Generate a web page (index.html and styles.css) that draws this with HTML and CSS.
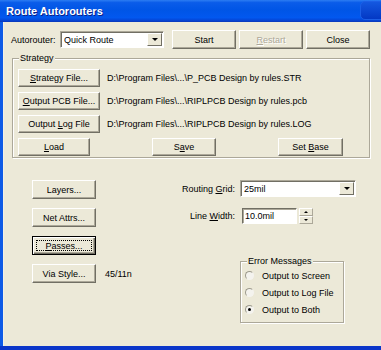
FILE: index.html
```html
<!DOCTYPE html>
<html lang="en">

<head>
    <meta charset="UTF-8">
    <title>Route Autorouters</title>
    <link rel="stylesheet" href="styles.css">
</head>

<body>
    <div class="window">
        <div class="titlebar">
            <span class="title">Route Autorouters</span>
            <span class="caption-btn"></span>
        </div>
        <div class="client">
            <!-- autorouter choice + main buttons -->
            <div class="top-row">
                <span class="lbl-router">Autorouter:</span>
                <div class="combo combo-router">
                    <span class="combo-text">Quick Route</span>
                    <span class="drop-btn"><i class="arrow-down"></i></span>
                </div>
                <div class="top-buttons">
                    <button class="btn top-btn" type="button">Start</button>
                    <button class="btn top-btn disabled" type="button"><u>R</u>estart</button>
                    <button class="btn top-btn" type="button">Close</button>
                </div>
            </div>

            <!-- strategy files -->
            <fieldset class="group strategy">
                <legend>Strategy</legend>
                <div class="file-row">
                    <button class="btn file-btn" type="button"><u>S</u>trategy File...</button>
                    <span class="path">D:\Program Files\...\P_PCB Design by rules.STR</span>
                </div>
                <div class="file-row">
                    <button class="btn file-btn" type="button"><u>O</u>utput PCB File...</button>
                    <span class="path">D:\Program Files\...\RIPLPCB Design by rules.pcb</span>
                </div>
                <div class="file-row">
                    <button class="btn file-btn" type="button">Output <u>L</u>og File</button>
                    <span class="path">D:\Program Files\...\RIPLPCB Design by rules.LOG</span>
                </div>
                <div class="action-row">
                    <button class="btn load-btn" type="button"><u>L</u>oad</button>
                    <button class="btn save-btn" type="button">S<u>a</u>ve</button>
                    <button class="btn base-btn" type="button">Set <u>B</u>ase</button>
                </div>
            </fieldset>

            <div class="lower">
                <div class="left-col">
                    <button class="btn side-btn" type="button">Layers...</button>
                    <button class="btn side-btn" type="button">Net Attrs...</button>
                    <button class="btn side-btn focused" type="button"><span class="focus-rect"><u>P</u>asses...</span></button>
                    <div class="via-row">
                        <button class="btn side-btn" type="button">Via Style...</button>
                        <span class="via-val">45/11n</span>
                    </div>
                </div>
                <div class="right-col">
                    <div class="fields">
                        <span class="field-lbl">Routing <u>G</u>rid:</span>
                        <div class="combo combo-grid">
                            <span class="combo-text">25mil</span>
                            <span class="drop-btn"><i class="arrow-down"></i></span>
                        </div>
                        <span class="field-lbl">Line <u>W</u>idth:</span>
                        <div class="width-field">
                            <span class="textbox">10.0mil</span>
                            <span class="spin">
                                <span class="spin-part"><i class="arrow-up small"></i></span>
                                <span class="spin-part"><i class="arrow-down small"></i></span>
                            </span>
                        </div>
                    </div>
                    <fieldset class="group errors">
                        <legend>Error Messages</legend>
                        <div class="radio"><span class="radio-dot"></span>Output to Screen</div>
                        <div class="radio"><span class="radio-dot"></span>Output to Log File</div>
                        <div class="radio"><span class="radio-dot checked"></span>Output to Both</div>
                    </fieldset>
                </div>
            </div>
        </div>
    </div>
</body>
</html>
```

FILE: styles.css
```css
* {
    box-sizing: border-box;
}

body {
    margin: 0;
    font-family: "Liberation Sans", Arial, sans-serif;
    font-size: 9px;
    color: #000;
    background: #ece9d8;
}

.window {
    width: 381px;
    height: 350px;
    overflow: hidden;
    display: flex;
    flex-direction: column;
    border-bottom: 4px solid #0a35c9;
}

/* title bar */
.titlebar {
    position: relative;
    height: 22px;
    flex: none;
    display: flex;
    align-items: center;
    padding-left: 6px;
    background: linear-gradient(#2c7df2, #0a5ce9 12%, #0055e6 45%, #0258ef 80%, #0546d6 92%, #0a36b8);
}

.title {
    font-weight: bold;
    font-size: 11px;
    color: #fff;
    text-shadow: 1px 1px #0a1f8a;
}

.caption-btn {
    position: absolute;
    right: -6px;
    top: 1px;
    width: 27px;
    height: 19px;
    border-radius: 5px;
    background: linear-gradient(#1458e0, #0338c4);
    border: 1px solid #1c5fe6;
}

.client {
    flex: 1;
    background: #ece9d8;
    border-left: 3px solid #0d5ae6;
    box-shadow: inset 1px 0 #ffffff55;
}

/* buttons */
.btn {
    font: inherit;
    height: 19px;
    padding: 0;
    color: #000;
    background: #ece9d8;
    border: 1px solid;
    border-color: #fff #716f64 #716f64 #fff;
    box-shadow: inset -1px -1px #aca899;
    white-space: nowrap;
}

.btn.disabled {
    color: #aca899;
    text-shadow: 1px 1px #fff;
}

.btn.focused {
    border-color: #000;
    box-shadow: inset 1px 1px #fff, inset -1px -1px #716f64, inset -2px -2px #aca899;
    padding: 3px;
}

.focus-rect {
    display: block;
    height: 100%;
    line-height: 11px;
    border: 1px dotted #000;
}

/* combo boxes */
.combo {
    display: flex;
    align-items: center;
    height: 17px;
    background: #fff;
    border: 1px solid;
    border-color: #aca899 #fff #fff #aca899;
    box-shadow: inset 1px 1px #716f64;
}

.combo-text {
    flex: 1;
    padding-left: 3px;
}

.drop-btn {
    width: 15px;
    height: 13px;
    margin-right: 1px;
    display: flex;
    align-items: center;
    justify-content: center;
    background: #ece9d8;
    border: 1px solid;
    border-color: #fff #716f64 #716f64 #fff;
}

.arrow-down {
    border-left: 3px solid transparent;
    border-right: 3px solid transparent;
    border-top: 3px solid #000;
}

.arrow-up {
    border-left: 3px solid transparent;
    border-right: 3px solid transparent;
    border-bottom: 3px solid #000;
}

.arrow-down.small,
.arrow-up.small {
    border-width: 2px;
}

/* top row */
.top-row {
    display: flex;
    align-items: center;
    height: 19px;
    margin-top: 8px;
    padding-left: 8px;
}

.lbl-router {
    width: 49px;
}

.combo-router {
    width: 104px;
}

.top-buttons {
    display: flex;
    gap: 3px;
    margin-left: 8px;
}

.top-btn {
    width: 64px;
}

/* group boxes */
.group {
    margin: 0;
    border: 1px solid #aca899;
    box-shadow: inset 1px 1px #fff, 1px 1px #fff;
}

.group legend {
    padding: 0 1px;
    line-height: 11px;
    background: #ece9d8;
}

.strategy {
    margin: 4px 0 0 9px;
    width: 358px;
    padding: 5px 26px 1px 5px;
}

.strategy legend {
    margin-left: 1px;
}

.file-row {
    display: flex;
    align-items: center;
    gap: 7px;
    margin-bottom: 5px;
}

.file-btn {
    width: 82px;
    height: 18px;
}

.path {
    white-space: nowrap;
}

.action-row {
    display: flex;
    justify-content: space-between;
}

.action-row .btn {
    height: 18px;
}

.load-btn {
    width: 72px;
}

.save-btn {
    width: 64px;
}

.base-btn {
    width: 65px;
}

/* lower part */
.lower {
    display: flex;
    margin-top: 22px;
}

.left-col {
    width: 177px;
    padding-left: 29px;
    display: flex;
    flex-direction: column;
    gap: 9px;
}

.side-btn {
    width: 64px;
}

.via-row {
    display: flex;
    align-items: center;
    gap: 9px;
}

.fields {
    display: grid;
    grid-template-columns: 55px auto;
    column-gap: 5px;
    row-gap: 11px;
    align-items: center;
}

.field-lbl {
    text-align: right;
    white-space: nowrap;
}

.combo-grid {
    width: 116px;
}

.width-field {
    display: flex;
    align-items: center;
    gap: 2px;
    margin-left: 2px;
}

.textbox {
    width: 55px;
    height: 16px;
    line-height: 14px;
    padding-left: 2px;
    background: #fff;
    border: 1px solid;
    border-color: #716f64 #fff #fff #716f64;
    box-shadow: inset 1px 1px #aca899;
}

.spin {
    display: flex;
    flex-direction: column;
    width: 14px;
    height: 16px;
}

.spin-part {
    flex: 1;
    display: flex;
    align-items: center;
    justify-content: center;
    border: 1px solid;
    border-color: #fff #aca899 #aca899 #fff;
}

.errors {
    width: 104px;
    margin: 32px 0 0 60px;
    padding: 0 4px 4px 4px;
}

.errors legend {
    margin-left: 2px;
}

.radio {
    display: flex;
    align-items: center;
    height: 17px;
    white-space: nowrap;
}

.radio-dot {
    position: relative;
    width: 9px;
    height: 9px;
    margin-right: 8px;
    border-radius: 50%;
    border: 1px solid;
    border-color: #9d9a8c #f4f3ee #f4f3ee #9d9a8c;
    background: #f4f3ee;
}

.radio-dot.checked::after {
    content: "";
    position: absolute;
    left: 2px;
    top: 2px;
    width: 3px;
    height: 3px;
    border-radius: 50%;
    background: #000;
}
```
